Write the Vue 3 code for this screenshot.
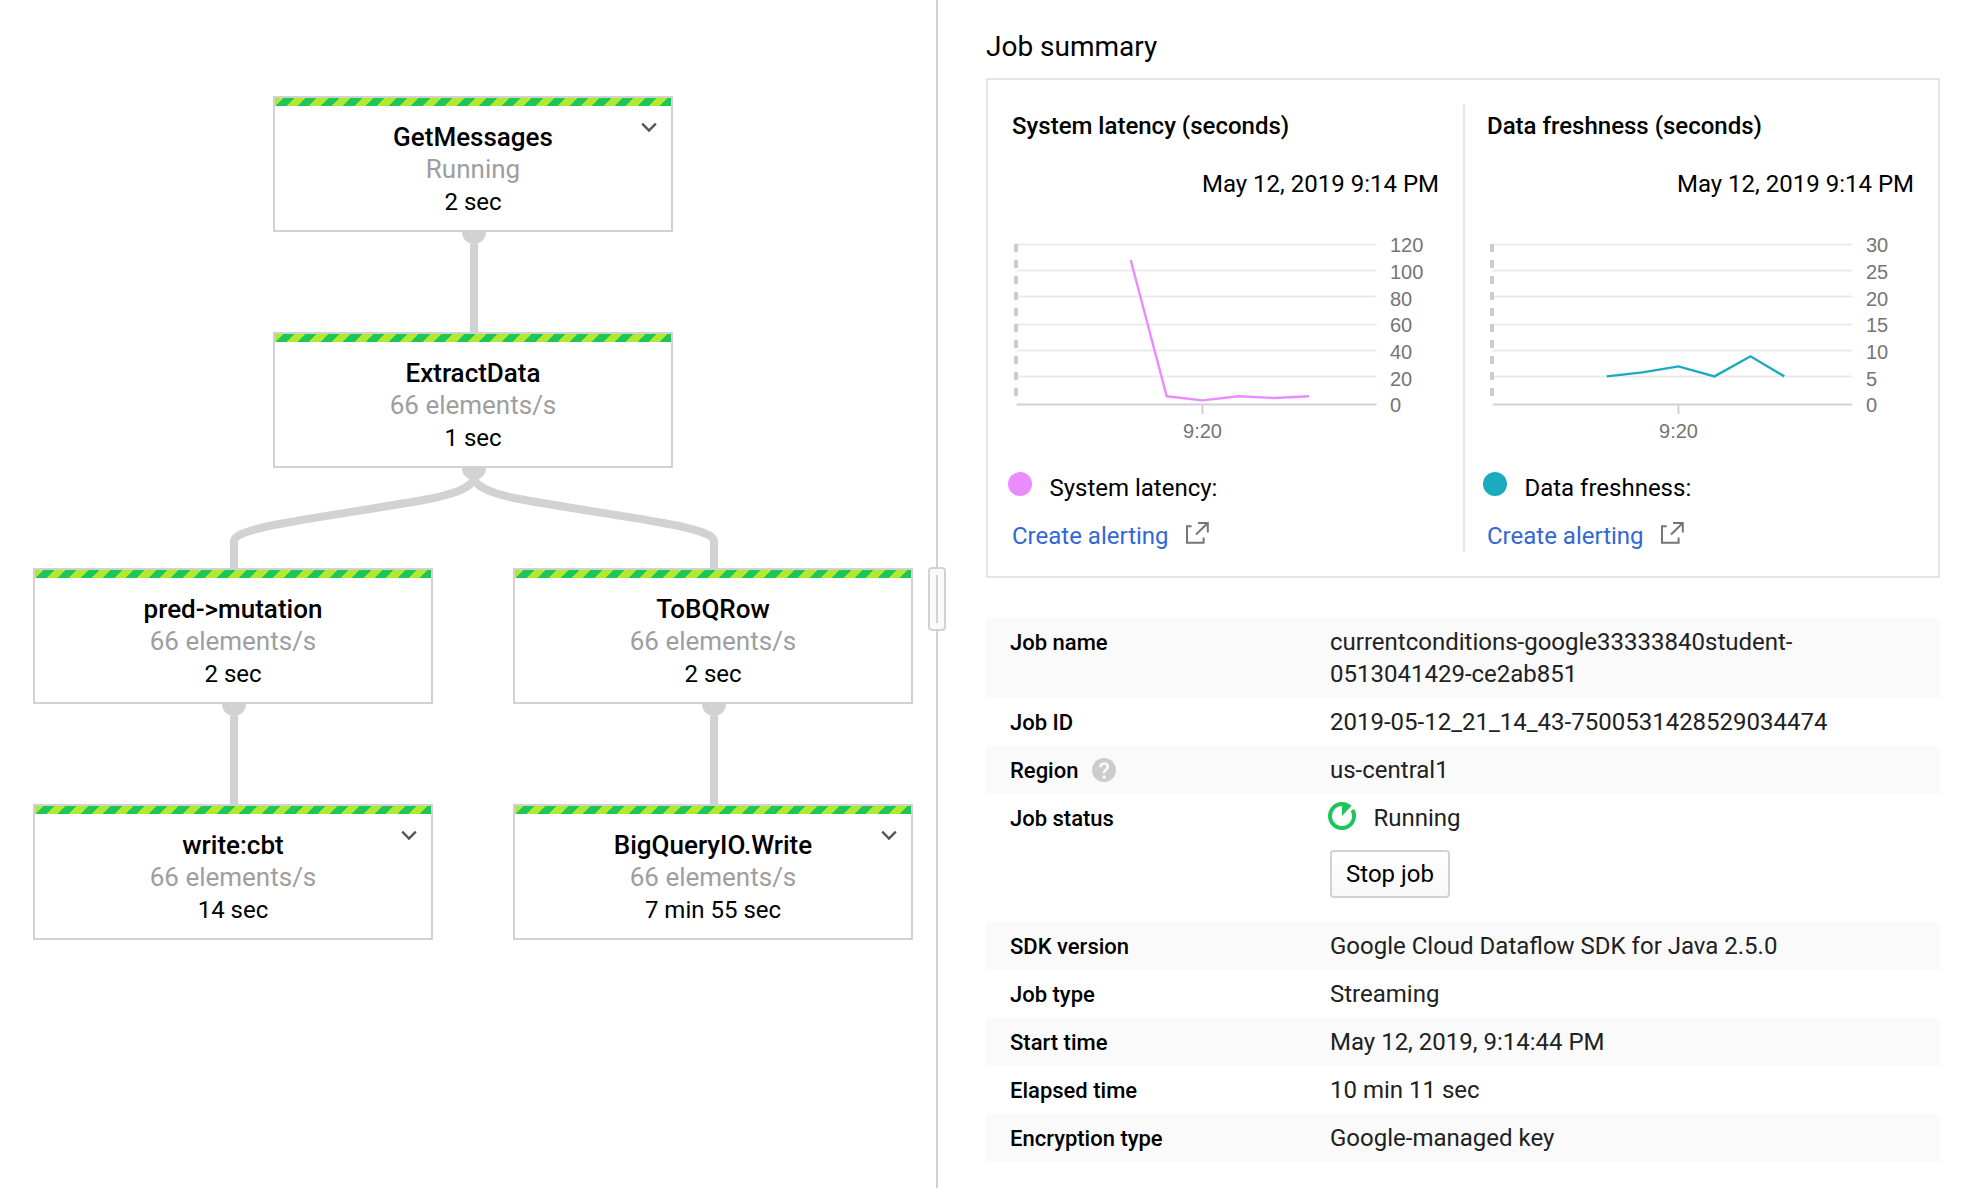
<script setup>
const nodes = [
  { id: 'get', x: 273, y: 96, name: 'GetMessages', rate: 'Running', time: '2 sec', expand: true, out: true },
  { id: 'extract', x: 273, y: 332, name: 'ExtractData', rate: '66 elements/s', time: '1 sec', out: true },
  { id: 'pred', x: 33, y: 568, name: 'pred->mutation', rate: '66 elements/s', time: '2 sec', out: true },
  { id: 'row', x: 513, y: 568, name: 'ToBQRow', rate: '66 elements/s', time: '2 sec', out: true },
  { id: 'cbt', x: 33, y: 804, name: 'write:cbt', rate: '66 elements/s', time: '14 sec', expand: true },
  { id: 'bq', x: 513, y: 804, name: 'BigQueryIO.Write', rate: '66 elements/s', time: '7 min 55 sec', expand: true },
]

const edges = [
  'M474 244V332',
  'M474 480C470 486 462 492 434 498C394 506 314 517 274 525C234 533 234 539 234 541.5V568',
  'M474 480C478 486 486 492 514 498C554 506 634 517 674 525C714 533 714 539 714 541.5V568',
  'M234 716V804',
  'M714 716V804',
]

const gridY = [8.5, 34.5, 60.5, 88.5, 114.5, 140.5]
const labelY = [15.5, 42.5, 69.5, 96, 122.5, 150, 176]

const charts = [
  {
    title: 'System latency (seconds)',
    legend: 'System latency:',
    color: '#e88cff',
    ticks: ['120', '100', '80', '60', '40', '20', '0'],
    line: '118.7,24 154.7,160.3 190.5,164.4 226.5,160.3 262.5,162 297,160.3',
  },
  {
    title: 'Data freshness (seconds)',
    legend: 'Data freshness:',
    color: '#1caabf',
    ticks: ['30', '25', '20', '15', '10', '5', '0'],
    line: '118.7,140.4 154.5,136.4 190.5,130.4 226.5,140.4 262.5,120.3 296.3,140.4',
  },
]

const details = [
  { label: 'Job name', value: 'currentconditions-google33333840student-0513041429-ce2ab851' },
  { label: 'Job ID', value: '2019-05-12_21_14_43-7500531428529034474' },
  { label: 'Region', value: 'us-central1', help: true },
  { label: 'Job status', value: 'Running', status: true },
  { label: 'SDK version', value: 'Google Cloud Dataflow SDK for Java 2.5.0' },
  { label: 'Job type', value: 'Streaming' },
  { label: 'Start time', value: 'May 12, 2019, 9:14:44 PM' },
  { label: 'Elapsed time', value: '10 min 11 sec' },
  { label: 'Encryption type', value: 'Google-managed key' },
]
</script>

<template>
  <div class="page">
    <main class="graph">
      <svg class="edges" width="936" height="1188" viewBox="0 0 936 1188">
        <path v-for="d in edges" :key="d" :d="d" />
        <template v-for="n in nodes" :key="n.id">
          <circle v-if="n.out" :cx="n.x + 201" :cy="n.y + 136" r="12" />
        </template>
      </svg>
      <section v-for="n in nodes" :key="n.id" class="node" :style="{ left: n.x + 'px', top: n.y + 'px' }">
        <div class="stripe"></div>
        <div class="name">{{ n.name }}</div>
        <div class="rate">{{ n.rate }}</div>
        <div class="time">{{ n.time }}</div>
        <svg v-if="n.expand" class="chevron" width="16" height="12" viewBox="0 0 16 12">
          <path d="M1.2 1.6L8 8.6L14.8 1.6" />
        </svg>
      </section>
    </main>

    <div class="splitter"><div class="handle"><i></i></div></div>

    <aside class="summary">
      <h1>Job summary</h1>
      <div class="card">
        <section v-for="c in charts" :key="c.title" class="metric">
          <h2>{{ c.title }}</h2>
          <div class="date">May 12, 2019 9:14 PM</div>
          <svg class="chart" width="426" height="216" viewBox="0 0 426 216">
            <line v-for="y in gridY" :key="y" class="grid" x1="4.7" x2="364.5" :y1="y" :y2="y" />
            <line class="axis" x1="4.7" x2="364.5" y1="168.5" y2="168.5" />
            <line class="axis" x1="190.5" x2="190.5" y1="169" y2="178" />
            <line class="dash" x1="4" x2="4" y1="8" y2="160" />
            <polyline :points="c.line" :stroke="c.color" />
            <text v-for="(t, i) in c.ticks" :key="t" x="378" :y="labelY[i]">{{ t }}</text>
            <text x="190.5" y="202" text-anchor="middle">9:20</text>
          </svg>
          <div class="legend"><i :style="{ background: c.color }"></i><span>{{ c.legend }}</span></div>
          <div class="alert">
            <a>Create alerting</a>
            <svg width="24" height="24" viewBox="0 0 24 24">
              <path d="M6.6 5.2H2V21.8H18.6V16.5M13 2H22.8V11.5M22.5 2.3L11 13.5" />
            </svg>
          </div>
        </section>
      </div>

      <dl class="details">
        <div v-for="r in details" :key="r.label" class="row">
          <dt>
            <span>{{ r.label }}</span>
            <svg v-if="r.help" width="24" height="24" viewBox="0 0 24 24">
              <circle cx="12" cy="12" r="12" fill="#ccc" />
              <path d="M8.4 9.2C8.4 6.9 10 5.5 12.1 5.5C14.2 5.5 15.8 6.8 15.8 8.8C15.8 11.6 12.1 11.7 12.1 15.2" fill="none" stroke="#fafafa" stroke-width="2.6" />
              <circle cx="12.1" cy="19" r="1.8" fill="#fafafa" />
            </svg>
          </dt>
          <dd v-if="r.status">
            <div class="status">
              <svg width="28" height="28" viewBox="0 0 28 28">
                <path d="M24.4 8A12 12 0 1 1 14 2" fill="none" stroke="#1ec659" stroke-width="4" />
                <path d="M14 0A14 14 0 0 1 23.6 3.8L14 14Z" fill="#1ec659" />
              </svg>
              <span>{{ r.value }}</span>
            </div>
            <button>Stop job</button>
          </dd>
          <dd v-else>{{ r.value }}</dd>
        </div>
      </dl>
    </aside>
  </div>
</template>

<style>
body {
  background: #fff;
}
</style>

<style scoped>
.page {
  display: flex;
  width: 1968px;
  height: 1188px;
  overflow: hidden;
  background: #fff;
  color: #000;
  font: 400 24px/32px Roboto, sans-serif;
}
.graph {
  position: relative;
  width: 936px;
  flex: none;
}
.edges {
  display: block;
}
.edges path {
  fill: none;
  stroke: #d2d2d2;
  stroke-width: 8;
}
.edges circle {
  fill: #d2d2d2;
}
.node {
  position: absolute;
  box-sizing: border-box;
  width: 400px;
  height: 136px;
  border: 2px solid #d2d2d2;
  background: #fff;
  text-align: center;
}
.stripe {
  height: 8px;
  margin-bottom: 15px;
  background: repeating-linear-gradient(-45deg, #1ec659 0 8px, #b0e92f 8px 16px);
}
.name {
  font-size: 26px;
  font-weight: 500;
}
.rate {
  font-size: 26px;
  color: #9e9e9e;
}
.time {
  margin-top: 1px;
}
.chevron {
  position: absolute;
  right: 14px;
  top: 24px;
  fill: none;
  stroke: #555;
  stroke-width: 2.4;
}
.splitter {
  display: flex;
  flex: none;
  width: 2px;
  justify-content: center;
  background: #d2d2d2;
}
.handle {
  display: flex;
  flex: none;
  box-sizing: border-box;
  width: 18px;
  height: 64px;
  margin-top: 567px;
  justify-content: center;
  align-items: center;
  border: 2px solid #d2d2d2;
  border-radius: 4px;
  background: #fafafa;
  z-index: 1;
}
.handle i {
  width: 2px;
  height: 48px;
  background: #d2d2d2;
}
.summary {
  width: 954px;
  margin-left: 48px;
}
h1 {
  margin: 31px 0 15px;
  font-size: 28px;
  font-weight: 400;
  line-height: 32px;
}
.card {
  display: flex;
  box-sizing: border-box;
  height: 500px;
  padding: 24px 0;
  border: 2px solid #e5e5e5;
}
.metric {
  box-sizing: border-box;
  width: 475px;
  padding: 0 24px;
}
.metric + .metric {
  padding-left: 22px;
  border-left: 2px solid #e5e5e5;
}
h2 {
  margin: 6px 0 26px;
  font-size: 24px;
  font-weight: 500;
  line-height: 32px;
}
.date {
  text-align: right;
}
.chart {
  display: block;
  margin-top: 36px;
  overflow: visible;
}
.metric + .metric .chart {
  margin-left: 1px;
}
.chart text {
  fill: #757575;
  font: 20px 'Liberation Sans', sans-serif;
}
.chart polyline {
  fill: none;
  stroke-width: 2.4;
}
.grid {
  stroke: #ebebeb;
  stroke-width: 2;
}
.axis {
  stroke: #d2d2d2;
  stroke-width: 2;
}
.dash {
  stroke: #ccc;
  stroke-width: 4;
  stroke-dasharray: 8 8;
}
.legend {
  display: flex;
  height: 32px;
  margin: 20px 0 16px -4px;
}
.legend i {
  width: 24px;
  height: 24px;
  margin-right: 17.4px;
  border-radius: 50%;
}
.alert {
  display: flex;
  gap: 16px;
}
.alert a {
  color: #3367d6;
}
.alert svg {
  margin-top: 1px;
}
.alert path {
  fill: none;
  stroke: #757575;
  stroke-width: 2;
}
.details {
  margin: 40px 0 0;
}
.row {
  display: flex;
  padding: 8px 24px;
}
.row:nth-child(odd) {
  background: #fafafa;
}
dt {
  display: flex;
  gap: 14px;
  width: 320px;
  font-size: 22px;
  font-weight: 500;
}
dt span {
  padding-top: 1px;
  margin-bottom: -1px;
}
dt svg {
  margin-top: 4px;
}
dd {
  width: 500px;
  margin: 0;
  color: #212121;
}
.status {
  display: flex;
  gap: 17.5px;
  margin-left: -2px;
}
button {
  display: block;
  box-sizing: border-box;
  width: 120px;
  height: 48px;
  margin: 16px 0;
  padding: 0;
  border: 2px solid #d2d2d2;
  border-radius: 4px;
  background: linear-gradient(#fff, #f8f8f8);
  color: #000;
  font: inherit;
}
</style>
